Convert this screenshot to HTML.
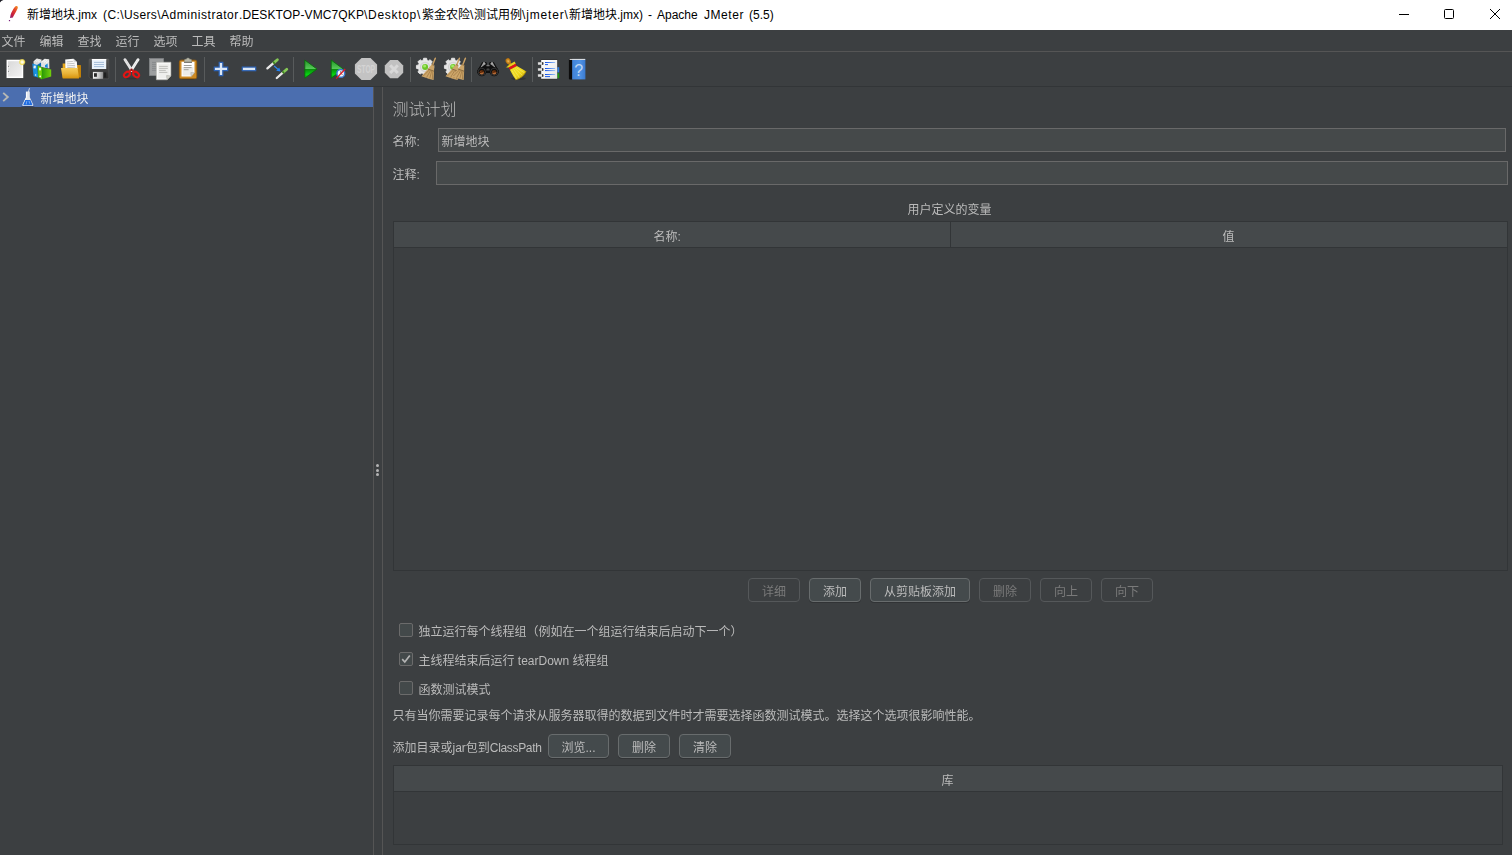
<!DOCTYPE html>
<html lang="zh-CN">
<head>
<meta charset="utf-8">
<title>Apache JMeter</title>
<style>
html,body{margin:0;padding:0;}
body{width:1512px;height:855px;overflow:hidden;background:#3c3f41;position:relative;
 font-family:"Liberation Sans","Noto Sans CJK SC",sans-serif;font-size:12px;color:#bbbbbb;}
.abs{position:absolute;}
#menubar,#tree,#main{will-change:transform;}
#main{position:absolute;left:0;top:0;width:1512px;height:0;}
.t{position:absolute;white-space:nowrap;line-height:16px;height:16px;font-weight:400;margin-top:1px;margin-left:-.5px;}
#titlebar{position:absolute;left:0;top:0;width:1512px;height:30px;background:#ffffff;color:#000;}
#titlebar .t{font-weight:400;color:#000;top:6px;margin-left:0;}
#menubar{position:absolute;left:0;top:30px;width:1512px;height:21px;background:#3c3f41;}
#menuline{position:absolute;left:0;top:51px;width:1512px;height:1px;background:#555555;}
#toolbar{position:absolute;left:0;top:52px;width:1512px;height:34px;background:#3c3f41;}
#toolline{position:absolute;left:0;top:86px;width:1512px;height:1px;background:#323537;}
.sep{position:absolute;top:5px;width:1px;height:25px;background:#585b5c;}
.ic{position:absolute;top:6px;width:22px;height:22px;overflow:visible;}
#tree{position:absolute;left:0;top:87px;width:373px;height:768px;background:#3c3f41;}
#treesel{position:absolute;left:0;top:0;width:373px;height:20px;background:#4b6eaf;}
.vline{position:absolute;top:87px;width:1px;height:768px;background:#555555;}
.field{position:absolute;box-sizing:border-box;background:#45494a;border:1px solid #696969;}
.tbl{position:absolute;box-sizing:border-box;border:1px solid #323537;background:#3c3f41;}
.th{position:absolute;left:0;top:0;right:0;height:25px;background:#45494b;border-bottom:1px solid #323537;}
.btn{position:absolute;box-sizing:border-box;height:24px;border:1px solid #686c6d;border-radius:4px;background:#444a4c;
 text-align:center;line-height:24px;padding-top:1px;font-weight:400;color:#bbbbbb;box-shadow:0 1px 0 rgba(0,0,0,.18);}
.btn.dis{background:#3c3f41;border-color:#55585a;color:#7a7a7a;box-shadow:none;}
.cb{position:absolute;box-sizing:border-box;width:14px;height:14px;border:1px solid #6b6b6b;border-radius:2px;background:#43494a;}
</style>
</head>
<body>
<div id="titlebar">
<svg class="abs" style="left:0;top:0" width="6" height="6" viewBox="0 0 6 6"><path d="M0 0H3.4Q.9 .6 0 2.6Z" fill="#1a1a22"/></svg>
<svg class="abs" style="left:7px;top:5px" width="12" height="17" viewBox="0 0 12 17">
<defs><linearGradient id="fg" x1="1" y1="0" x2="0" y2="1"><stop offset="0" stop-color="#f79a23"/><stop offset=".35" stop-color="#e4442a"/><stop offset=".7" stop-color="#c7203e"/><stop offset="1" stop-color="#7a1f7d"/></linearGradient></defs>
<path d="M9.3 1C10.8 .9 11.2 2.2 10.6 3.6C9.6 6 8 8.8 6.4 11.2L6 12.4L3 13L3.6 9.8C4.6 7 6.4 3.8 7.8 2.1C8.3 1.4 8.8 1 9.3 1Z" fill="url(#fg)"/>
<rect x="1.9" y="15" width="1.2" height="1.2" fill="#7a1f7d"/>
</svg>
<span class="t" style="left:27px">新增地块.jmx</span>
<span class="t" style="left:103px;letter-spacing:.4px">(C:\Users\</span>
<span class="t" style="left:161px;letter-spacing:.55px">Administrator</span>
<span class="t" style="left:239px;letter-spacing:.12px">.DESKTOP-VMC7QKP</span>
<span class="t" style="left:364px;letter-spacing:.7px">\Desktop\</span>
<span class="t" style="left:422px">紫金农险\</span>
<span class="t" style="left:474px">测试用例</span>
<span class="t" style="left:522px;letter-spacing:.85px">\jmeter\</span>
<span class="t" style="left:569px">新增地块.jmx)</span>
<span class="t" style="left:648px">-</span>
<span class="t" style="left:657px">Apache</span>
<span class="t" style="left:704px;letter-spacing:.55px">JMeter</span>
<span class="t" style="left:749px">(5.5)</span>
<svg class="abs" style="left:1394px;top:4px" width="112" height="22" viewBox="0 0 112 22" fill="none" stroke="#000" stroke-width="1">
<path d="M5 10.5H15"/>
<rect x="50.5" y="5.5" width="9" height="9" rx="1"/>
<path d="M96 5L106 15M106 5L96 15"/>
</svg>
</div>
<div id="menubar">
<span class="t" style="left:2px;top:3px">文件</span>
<span class="t" style="left:40px;top:3px">编辑</span>
<span class="t" style="left:78px;top:3px">查找</span>
<span class="t" style="left:116px;top:3px">运行</span>
<span class="t" style="left:154px;top:3px">选项</span>
<span class="t" style="left:192px;top:3px">工具</span>
<span class="t" style="left:230px;top:3px">帮助</span>
</div>
<div id="menuline"></div>
<!--TB0-->
<div id="toolbar">
<svg class="ic" style="left:4px" width="22" height="22" viewBox="0 0 22 22"><defs><linearGradient id="ng" x1="0" y1="0" x2="1" y2="1"><stop offset="0" stop-color="#d9d9d9"/><stop offset="1" stop-color="#f2f2f2"/></linearGradient>
<radialGradient id="ny"><stop offset="0" stop-color="#ffffff"/><stop offset=".35" stop-color="#fdf6c8"/><stop offset=".65" stop-color="#f3df55" stop-opacity=".95"/><stop offset="1" stop-color="#e8cf3a" stop-opacity="0"/></radialGradient></defs>
<rect x="2.3" y="1.5" width="17.2" height="18.9" fill="#8d8d86" opacity=".35"/>
<rect x="2.6" y="1.8" width="16.6" height="18.2" fill="#ffffff"/>
<rect x="4" y="3.2" width="13.8" height="15.4" fill="url(#ng)"/>
<circle cx="4.6" cy="8.2" r=".55" fill="#666"/><circle cx="5.4" cy="9" r=".6" fill="#fff"/>
<circle cx="4.6" cy="13.2" r=".55" fill="#666"/><circle cx="5.4" cy="14" r=".6" fill="#fff"/>
<circle cx="18.2" cy="4.1" r="3.6" fill="url(#ny)"/></svg>
<svg class="ic" style="left:32px" width="22" height="22" viewBox="0 0 22 22"><defs><linearGradient id="tg" x1="0" y1="0" x2="1" y2="0"><stop offset="0" stop-color="#2a9a06"/><stop offset="1" stop-color="#74d00c"/></linearGradient>
<linearGradient id="tb" x1="0" y1="0" x2="1" y2="0"><stop offset="0" stop-color="#1a84d8"/><stop offset="1" stop-color="#169be6"/></linearGradient></defs>
<path d="M1.4 3.4L4.6 .6L9.6 1.6L9.4 8.5L2 8.5Z" fill="#d9d9d9"/>
<path d="M2.6 3.2L5.6 1.2M4.2 3.8L7.4 1.6M6 4.2L9 2.2" stroke="#f6f6f6" stroke-width=".9"/>
<path d="M9 3.4L12.6 .7L17.2 1.2L17.4 10.5L9 9Z" fill="#e2e2e2"/>
<path d="M10.2 3.8L13.4 1.6M12 4.4L15.2 2.2M14 5L16.8 3" stroke="#fafafa" stroke-width=".9"/>
<path d="M5 7L9 4.6L9.4 17L6 18.5Z" fill="#0b68b4"/>
<path d="M13 7.2L15.6 5.4L15.8 10L13 9.2Z" fill="#1a8ada"/>
<path d="M.2 5.4L5.2 7L6.2 19.6L1.6 18.2Z" fill="url(#tb)"/>
<rect x="1.6" y="7.6" width="2.2" height="2.8" fill="#e6eef6" transform="rotate(8 2.7 9)"/>
<circle cx="3.6" cy="17" r=".75" fill="#e6f0fa"/>
<path d="M10 9.6L19.2 11.4L19.2 18.6L10 21.2Z" fill="url(#tg)"/>
<path d="M5.8 7.6L10 9.6L10 21.2L6.2 19.2Z" fill="#78d60e"/>
<path d="M5.8 7.6L10 9.6L10 21.2L6.2 19.2Z" fill="none" stroke="#2f9a08" stroke-width=".5"/>
<rect x="7" y="9.8" width="2" height="2.6" fill="#eaf6dc"/>
<circle cx="8.2" cy="18.4" r=".8" fill="#ffffff"/></svg>
<svg class="ic" style="left:60px" width="22" height="22" viewBox="0 0 22 22"><defs><linearGradient id="og" x1="0" y1="0" x2="0" y2="1"><stop offset="0" stop-color="#f6cd5c"/><stop offset=".5" stop-color="#eab53a"/><stop offset="1" stop-color="#d6920a"/></linearGradient>
<linearGradient id="ob" x1="0" y1="0" x2="1" y2="0"><stop offset="0" stop-color="#e8a91c"/><stop offset="1" stop-color="#c07f06"/></linearGradient></defs>
<path d="M2.7 5.4H7.6L8.8 7H20.4Q21 7 21 7.8V19.6H2.7Z" fill="url(#ob)"/>
<path d="M5.6 1H13.8L17 4.4V11.4H5Z" fill="#fbfbfb" transform="rotate(-4 11 6)"/>
<path d="M7 3.6H13M7 5.6H14.6M7 7.6H15M7 9.4H15" stroke="#b9b9b9" stroke-width=".8" transform="rotate(-4 11 6)"/>
<path d="M13.8 1L17 4.4H13.8Z" fill="#d5d8dc" transform="rotate(-4 11 6)"/>
<path d="M1.2 9.9Q1 9.9 1 10.4L2.6 20Q2.7 20.6 3.3 20.6H18.6Q19.2 20.6 19 20L17.6 10.6Q17.5 9.9 16.8 9.9Z" fill="url(#og)"/></svg>
<svg class="ic" style="left:88px" width="22" height="22" viewBox="0 0 22 22"><defs><linearGradient id="sg" x1="0" y1="0" x2="0" y2="1"><stop offset="0" stop-color="#555555"/><stop offset="1" stop-color="#2b2b2b"/></linearGradient>
<linearGradient id="ss" x1="0" y1="0" x2="1" y2="0"><stop offset="0" stop-color="#f4f4f4"/><stop offset=".6" stop-color="#c8c8c8"/><stop offset="1" stop-color="#8f8f8f"/></linearGradient></defs>
<path d="M2 1H20Q20.8 1 20.8 1.8V20Q20.8 20.8 20 20.8H3L1.1 19V1.8Q1.1 1 2 1Z" fill="url(#sg)" stroke="#606060" stroke-width=".5"/>
<rect x="3.9" y="1" width="14.3" height="10" fill="#eaf2fb"/>
<rect x="3.9" y="1" width="14.3" height="1.2" fill="#ffffff"/>
<path d="M6 4.4H16M6 6.5H16M6 8.6H16" stroke="#9db7d5" stroke-width=".9"/>
<rect x="4.9" y="13.9" width="10.2" height="6.9" fill="url(#ss)"/>
<rect x="6" y="15.2" width="2.9" height="3.6" fill="#2a2a2a"/>
<rect x="16" y="14.5" width="2.2" height="5" fill="#1f1f1f"/></svg>
<div class="sep" style="left:115px"></div>
<svg class="ic" style="left:121px" width="22" height="22" viewBox="0 0 22 22"><ellipse cx="11" cy="20.6" rx="6" ry="1" fill="#222" opacity=".35"/>
<path d="M3.9 1.6L10.9 12.6" stroke="#e6e6e6" stroke-width="2.8" stroke-linecap="round"/>
<path d="M17.1 1.6L10.1 12.6" stroke="#f4f4f4" stroke-width="2.8" stroke-linecap="round"/>
<path d="M3.9 1.6L10.9 12.6M17.1 1.6L10.1 12.6" stroke="#c4c4c4" stroke-width=".6" stroke-dasharray="1 1"/>
<ellipse cx="5.9" cy="16.5" rx="3.3" ry="2.3" transform="rotate(-40 5.9 16.5)" fill="none" stroke="#e21414" stroke-width="2.1"/>
<ellipse cx="15.1" cy="16.5" rx="3.3" ry="2.3" transform="rotate(40 15.1 16.5)" fill="none" stroke="#e21414" stroke-width="2.1"/>
<path d="M8.2 13.8L10.5 11.6L12.8 13.8" fill="none" stroke="#e21414" stroke-width="2"/>
<circle cx="10.5" cy="11.8" r=".7" fill="#333"/></svg>
<svg class="ic" style="left:149px" width="22" height="22" viewBox="0 0 22 22"><rect x=".4" y=".5" width="14.2" height="17.1" fill="#9c9e9f" stroke="#85888a" stroke-width=".6"/>
<path d="M3 4.4H12.4M3 6.4H12.4M3 8.4H12.4M3 10.4H12.4M3 12.3H12.4" stroke="#85878a" stroke-width=".9"/>
<path d="M7.4 4.2H21.9V18L18.2 21.8H7.4Z" fill="#ffffff" stroke="#b0b0a8" stroke-width=".6"/>
<path d="M8.6 5.4H20.7V17.4L17.6 20.6H8.6Z" fill="#efefed"/>
<path d="M10.1 8.4H18.8M10.1 10.4H18.8M10.1 12.4H16.8M10.1 14.4H18.4" stroke="#b9b9b5" stroke-width=".9"/>
<path d="M21.9 18L18.2 21.8L17.6 17.6Z" fill="#d8d8d2" stroke="#9c9c94" stroke-width=".5"/></svg>
<svg class="ic" style="left:177px" width="22" height="22" viewBox="0 0 22 22"><ellipse cx="11" cy="21.4" rx="7" ry=".7" fill="#1c1c1c" opacity=".3"/>
<rect x="2.4" y="2.2" width="17.3" height="18.5" rx="1.6" fill="#cc8a24" stroke="#9b5f0a" stroke-width=".9"/>
<path d="M4.5 3.8H17.5V14.8L14.2 18.4H4.5Z" fill="#ffffff"/>
<path d="M5.6 9H16.4V14.4L13.6 17.4H5.6Z" fill="#ecece8"/>
<path d="M17.5 14.8L14.2 18.4L13.8 14.6Z" fill="#d9d9d2" stroke="#8a8a84" stroke-width=".4"/>
<path d="M6.8 7.5H14.6M6.8 9.6H14.6M6.8 11.7H11.6" stroke="#a2a29c" stroke-width="1"/>
<path d="M7.4 4V2.3Q7.4 1.3 8.4 1.3H9.3Q9.6 -.1 11 -.1Q12.4 -.1 12.7 1.3H13.6Q14.6 1.3 14.6 2.3V4Z" fill="#b9b9aa" stroke="#8e8e80" stroke-width=".4"/>
<path d="M7 4.4H15" stroke="#4c4c44" stroke-width=".8"/></svg>
<div class="sep" style="left:204px"></div>
<svg class="ic" style="left:210px" width="22" height="22" viewBox="0 0 22 22"><path d="M9.2 4.3H12.8V9.1H17.7V12.7H12.8V17.7H9.2V12.7H4.3V9.1H9.2Z" fill="#dbe7f6" stroke="#2d63b6" stroke-width="1.2"/></svg>
<svg class="ic" style="left:238px" width="22" height="22" viewBox="0 0 22 22"><rect x="4.3" y="9.1" width="13.4" height="3.6" fill="#dbe7f6" stroke="#2d63b6" stroke-width="1.2"/></svg>
<svg class="ic" style="left:266px" width="22" height="22" viewBox="0 0 22 22"><path d="M1.4 10.4L8 4.6" stroke="#e9e9e9" stroke-width="2.3" stroke-linecap="round"/>
<path d="M8 4.6L11.4 1.7" stroke="#86c856" stroke-width="2.8" stroke-linecap="round"/>
<path d="M7.3 5.2L8.5 4.2" stroke="#3f7d22" stroke-width="2.8"/>
<path d="M10.8 20L17.4 14.2" stroke="#e9e9e9" stroke-width="2.3" stroke-linecap="round"/>
<path d="M17.4 14.2L20.8 11.3" stroke="#86c856" stroke-width="2.8" stroke-linecap="round"/>
<path d="M16.7 14.8L17.9 13.8" stroke="#3f7d22" stroke-width="2.8"/>
<path d="M8.2 8L12 11.4" stroke="#2f86f0" stroke-width="1.2"/>
<path d="M14.6 13.4L10.2 12.8L13.2 9.4Z" fill="#1f82f5"/></svg>
<div class="sep" style="left:293px"></div>
<svg class="ic" style="left:299px" width="22" height="22" viewBox="0 0 22 22"><defs><linearGradient id="pg" x1="0" y1="0" x2="0" y2="1"><stop offset="0" stop-color="#1f9a22"/><stop offset=".49" stop-color="#58c85a"/><stop offset=".5" stop-color="#0a8a0c"/><stop offset=".8" stop-color="#08d412"/><stop offset="1" stop-color="#0aa40e"/></linearGradient></defs>
<path d="M5.8 2L18 11.1L5.8 20.2Z" fill="url(#pg)" stroke="#0b6a0d" stroke-width=".9" stroke-linejoin="round"/></svg>
<svg class="ic" style="left:327px" width="22" height="22" viewBox="0 0 22 22"><path d="M4.2 2L16.4 11.1L4.2 20.2Z" fill="url(#pg)" stroke="#0b6a0d" stroke-width=".9" stroke-linejoin="round"/>
<circle cx="13.8" cy="15.4" r="3.9" fill="#f4f6fa" stroke="#3a78cc" stroke-width="1.5"/>
<path d="M13.8 13V15.4L15.6 16.6" stroke="#555" stroke-width=".8" fill="none"/>
<path d="M9.2 20.6L18.2 11" stroke="#e01822" stroke-width="1.3"/></svg>
<svg class="ic" style="left:355px" width="22" height="22" viewBox="0 0 22 22"><path d="M6.5 -.1H15.5L22.1 6.5V15.5L15.5 22.1H6.5L-.1 15.5V6.5Z" fill="#c3c3c3"/>
<text x="11" y="15" text-anchor="middle" font-family="Liberation Sans, sans-serif" font-weight="700" font-size="11.4" fill="#d4d4d4" textLength="18" lengthAdjust="spacingAndGlyphs">STOP</text></svg>
<svg class="ic" style="left:383px" width="22" height="22" viewBox="0 0 22 22"><path d="M7.2 2H14.8L20.2 7.4V14.8L14.8 20.2H7.2L1.8 14.8V7.4Z" fill="#c1c1c1"/>
<path d="M7.2 7.2L14.8 15M14.8 7.2L7.2 15" stroke="#d8d8d8" stroke-width="3"/></svg>
<div class="sep" style="left:410px"></div>
<svg class="ic" style="left:416px" width="22" height="22" viewBox="0 0 22 22"><path d="M7.09 2.40L7.61 0.23L10.59 0.23L11.11 2.40L12.27 2.89L14.18 1.71L16.29 3.82L15.11 5.73L15.60 6.89L17.77 7.41L17.77 10.39L15.60 10.91L15.11 12.07L16.29 13.98L14.18 16.09L12.27 14.91L11.11 15.40L10.59 17.57L7.61 17.57L7.09 15.40L5.93 14.91L4.02 16.09L1.91 13.98L3.09 12.07L2.60 10.91L0.43 10.39L0.43 7.41L2.60 6.89L3.09 5.73L1.91 3.82L4.02 1.71L5.93 2.89Z" fill="#e6e6e6" stroke="#ececec" stroke-width=".8" stroke-linejoin="round"/><circle cx="9.1" cy="8.9" r="5.2" fill="#d2d2d2"/><circle cx="9.1" cy="8.9" r="4.2" fill="#e2e2e2"/><circle cx="9.1" cy="8.9" r="3" fill="#6cc626"/><circle cx="8.6" cy="8.0" r="1.5" fill="#a4e868"/><g transform="translate(19.3 0.2)">
<path d="M0 0L-2.8 7" stroke="#c9a064" stroke-width="1.5" stroke-linecap="round"/>
<path d="M-3.5 6.1L-1.1 6.9L-1.3 14L-1.7 21.9L-6 20.7L-13.9 18L-7 10.3Z" fill="#cda66a"/>
<path d="M-6 11.8L-12 17.8M-4.8 12.4L-8.8 19.4M-3.6 12.8L-5.6 20.4M-2.4 13L-3 21" stroke="#9a7440" stroke-width=".7"/>
<path d="M-7.4 10.8L-1.3 13" stroke="#80623a" stroke-width=".9"/>
<path d="M-3.4 6.4L-1.2 7.2" stroke="#80623a" stroke-width=".7"/>
</g></svg>
<svg class="ic" style="left:444px" width="22" height="22" viewBox="0 0 22 22"><path d="M7.09 2.40L7.61 0.23L10.59 0.23L11.11 2.40L12.27 2.89L14.18 1.71L16.29 3.82L15.11 5.73L15.60 6.89L17.77 7.41L17.77 10.39L15.60 10.91L15.11 12.07L16.29 13.98L14.18 16.09L12.27 14.91L11.11 15.40L10.59 17.57L7.61 17.57L7.09 15.40L5.93 14.91L4.02 16.09L1.91 13.98L3.09 12.07L2.60 10.91L0.43 10.39L0.43 7.41L2.60 6.89L3.09 5.73L1.91 3.82L4.02 1.71L5.93 2.89Z" fill="#e6e6e6" stroke="#ececec" stroke-width=".8" stroke-linejoin="round"/><circle cx="9.1" cy="8.9" r="5.2" fill="#d2d2d2"/><circle cx="9.1" cy="8.9" r="4.2" fill="#e2e2e2"/><circle cx="9.1" cy="8.9" r="3" fill="#6cc626"/><circle cx="8.6" cy="8.0" r="1.5" fill="#a4e868"/><g transform="translate(15.4 0.2)">
<path d="M0 0L-2.8 7" stroke="#c9a064" stroke-width="1.5" stroke-linecap="round"/>
<path d="M-3.5 6.1L-1.1 6.9L-1.3 14L-1.7 21.9L-6 20.7L-13.9 18L-7 10.3Z" fill="#cda66a"/>
<path d="M-6 11.8L-12 17.8M-4.8 12.4L-8.8 19.4M-3.6 12.8L-5.6 20.4M-2.4 13L-3 21" stroke="#9a7440" stroke-width=".7"/>
<path d="M-7.4 10.8L-1.3 13" stroke="#80623a" stroke-width=".9"/>
<path d="M-3.4 6.4L-1.2 7.2" stroke="#80623a" stroke-width=".7"/>
</g><g transform="translate(21.4 0.2)">
<path d="M0 0L-2.8 7" stroke="#c9a064" stroke-width="1.5" stroke-linecap="round"/>
<path d="M-3.5 6.1L-1.1 6.9L-1.3 14L-1.7 21.9L-6 20.7L-13.9 18L-7 10.3Z" fill="#cda66a"/>
<path d="M-6 11.8L-12 17.8M-4.8 12.4L-8.8 19.4M-3.6 12.8L-5.6 20.4M-2.4 13L-3 21" stroke="#9a7440" stroke-width=".7"/>
<path d="M-7.4 10.8L-1.3 13" stroke="#80623a" stroke-width=".9"/>
<path d="M-3.4 6.4L-1.2 7.2" stroke="#80623a" stroke-width=".7"/>
</g></svg>
<div class="sep" style="left:471px"></div>
<svg class="ic" style="left:477px" width="22" height="22" viewBox="0 0 22 22"><path d="M4.6 5Q5 4 6 4H8.6Q9.6 4 9.8 5L10.2 7H11.8L12.2 5Q12.4 4 13.4 4H16Q17 4 17.4 5L21.6 12.6V15H.4V12.6Z" fill="#101010"/>
<path d="M6 5H8.4L8.6 6.2L6.6 7.6L3 10.4ZM16 5H13.6L13.4 6.2L15.4 7.6L19 10.4Z" fill="#9c9c9c"/>
<path d="M6 4.8H8M14 4.8H16" stroke="#d0d0d0" stroke-width=".8"/>
<rect x="9.4" y="6.8" width="3.2" height="1.4" rx=".5" fill="#7a7a7a"/>
<path d="M9.8 10.4H12.2L12.8 12.6H9.2Z" fill="#444444"/>
<circle cx="4.8" cy="13.8" r="4.5" fill="#0c0c0c"/><circle cx="17.2" cy="13.8" r="4.5" fill="#0c0c0c"/>
<circle cx="4.8" cy="13.8" r="3.6" fill="none" stroke="#5c5c5c" stroke-width=".5"/><circle cx="17.2" cy="13.8" r="3.6" fill="none" stroke="#5c5c5c" stroke-width=".5"/>
<defs><linearGradient id="bl" x1="0" y1="0" x2="0" y2="1"><stop offset="0" stop-color="#4a2206"/><stop offset=".55" stop-color="#94481a"/><stop offset="1" stop-color="#d08a52"/></linearGradient></defs>
<circle cx="4.8" cy="14.2" r="2.2" fill="url(#bl)"/><circle cx="17.2" cy="14.2" r="2.2" fill="url(#bl)"/>
<path d="M2.8 14.8L6.8 13M15.2 14.8L19.2 13" stroke="#3a1a04" stroke-width=".7"/></svg>
<svg class="ic" style="left:505px" width="22" height="22" viewBox="0 0 22 22"><defs><linearGradient id="rb" x1="0" y1="0" x2="1" y2="1"><stop offset="0" stop-color="#efe022"/><stop offset=".55" stop-color="#f0d81c"/><stop offset="1" stop-color="#c4a204"/></linearGradient>
<radialGradient id="rk"><stop offset="0" stop-color="#ecc06a"/><stop offset=".5" stop-color="#cf8c22"/><stop offset="1" stop-color="#b06c0c"/></radialGradient></defs>
<ellipse cx="13.4" cy="20.6" rx="7.4" ry="1.5" fill="#1c1c1c" opacity=".35"/>
<path d="M3.6 4L6.4 8" stroke="#c8861e" stroke-width="2.6"/>
<ellipse cx="3.2" cy="3.2" rx="2.5" ry="3.1" transform="rotate(-28 3.2 3.2)" fill="url(#rk)"/>
<path d="M1.3 9.5Q3.6 6.6 6.2 5.6L9.6 3.6Q10.4 5 10.7 6L3.7 9.6Z" fill="#e6cf1e"/>
<path d="M1.3 9.5Q3.6 6.6 6.2 5.6" stroke="#b69a08" stroke-width=".5" fill="none"/>
<path d="M3.6 9.4L10.6 5.8L11.9 8.1L4.9 11.7Z" fill="#e0141a"/>
<path d="M4.9 11.7L11.9 8.1L21 13.2Q20 16.6 16.6 19Q13.6 21 10.8 21.8Q8.4 18.6 6.6 15Z" fill="url(#rb)"/>
<path d="M7 12.6L11.6 20.8M8.8 11.6L14.6 19.8M10.4 10.8L17.6 17.6M11.6 9.8L19.8 15" stroke="#f8f08a" stroke-width=".6" opacity=".8"/>
<path d="M21 13.2Q20 16.6 16.6 19Q13.6 21 10.8 21.8" stroke="#b09002" stroke-width=".9" fill="none"/></svg>
<div class="sep" style="left:532px"></div>
<svg class="ic" style="left:538px" width="22" height="22" viewBox="0 0 22 22"><defs><linearGradient id="fp" x1="0" y1="0" x2="1" y2="1"><stop offset="0" stop-color="#ffffff"/><stop offset="1" stop-color="#e6e6e6"/></linearGradient>
<linearGradient id="fl" gradientUnits="userSpaceOnUse" x1="7" y1="0" x2="17.2" y2="0"><stop offset="0" stop-color="#0a4ae6"/><stop offset="1" stop-color="#9cc4f6"/></linearGradient></defs>
<rect x="2.8" y="1.6" width="16.8" height="19.6" rx=".6" fill="#2a2a2a"/>
<rect x="19.4" y="9.2" width="1.8" height="5.2" fill="#2e7fe6"/><rect x="19.4" y="15.2" width="1.8" height="5" fill="#1d9a14"/>
<rect x="3.2" y="2" width="16" height="18.8" fill="url(#fp)"/>
<g fill="#e4e4e4" stroke="#9a9a9a" stroke-width=".3"><rect x="0" y="4.2" width="4.6" height="2.6"/><rect x="0" y="10.2" width="4.6" height="2.6"/><rect x="0" y="16.2" width="4.6" height="2.6"/></g>
<g fill="#111"><rect x="4.2" y="4.1" width="1.2" height="2.8" rx=".6"/><rect x="4.2" y="10.1" width="1.2" height="2.8" rx=".6"/><rect x="4.2" y="16.1" width="1.2" height="2.8" rx=".6"/></g>
<g stroke="url(#fl)" stroke-width="1"><path d="M7 4.5H17.2"/><path d="M7 10.5H17.2"/><path d="M7 12.6H17.2"/><path d="M7 16.5H17.2"/></g>
<path d="M7 6.6H10" stroke="#1d5be8" stroke-width="1"/><path d="M7 18.6H12" stroke="#1d5be8" stroke-width="1"/></svg>
<svg class="ic" style="left:566px" width="22" height="22" viewBox="0 0 22 22"><defs><linearGradient id="hb" x1="0" y1="0" x2="1" y2="0"><stop offset="0" stop-color="#3f82d8"/><stop offset=".6" stop-color="#4f92e4"/><stop offset="1" stop-color="#3a7ad0"/></linearGradient></defs>
<path d="M3.6 .8H6.2V21.4H3.6Q2.9 21.4 2.9 20.6V1.6Q2.9 .8 3.6 .8Z" fill="#0c0c0c"/>
<rect x="6.2" y="1.2" width="13.2" height="20.2" fill="url(#hb)"/>
<rect x="3.6" y=".9" width="15.6" height="1" fill="#e8e8e8"/>
<text x="12.7" y="18" text-anchor="middle" font-family="Liberation Sans, sans-serif" font-size="16" fill="#d6e4f6" opacity=".85">?</text></svg>
</div>
<div id="toolline"></div>
<!--TB1-->
<div id="tree"><div id="treesel"></div>
<svg class="abs" style="left:2px;top:4px" width="8" height="12" viewBox="0 0 8 12"><path d="M1.2 1.9L5.8 6L1.2 10.1" fill="none" stroke="#b7b8b4" stroke-width="1.9"/></svg>
<svg class="abs" style="left:20px;top:1px" width="16" height="19" viewBox="0 0 16 19">
<ellipse cx="7.8" cy="18.3" rx="6.8" ry=".7" fill="#2a3350" opacity=".75"/>
<path d="M9.5 .2L7.6 6.4" stroke="#dfe4ee" stroke-width=".9"/>
<path d="M5.9 3.6H9.8V9.2L13.3 16.8Q13.6 18.1 12.4 18.1H3.2Q2 18.1 2.3 16.8L5.9 9.2Z" fill="#e3e7ee"/>
<path d="M6.6 4.2V9.4L4.2 14.6" stroke="#ffffff" stroke-width="1" fill="none"/>
<path d="M5.3 12H10.4L12.3 16.4Q12.5 17.3 11.7 17.3H3.9Q3.1 17.3 3.4 16.4Z" fill="#1f6be0"/>
<path d="M6.8 13L6.2 16.4M9 12.8L9.6 15.6" stroke="#8cb8f6" stroke-width=".8"/>
</svg>
<span class="t" style="left:41px;top:3px;color:#f2f2f2">新增地块</span>
</div>
<div class="vline" style="left:373px"></div>
<div class="vline" style="left:382px"></div>
<div class="abs" style="left:376px;top:464px;width:3px;height:3px;border-radius:50%;background:#b4b4b4"></div>
<div class="abs" style="left:376px;top:469px;width:3px;height:3px;border-radius:50%;background:#b4b4b4"></div>
<div class="abs" style="left:376px;top:473px;width:3px;height:3px;border-radius:50%;background:#b4b4b4"></div>
<div id="main">
<span class="t" style="left:393px;top:99px;font-size:16px;line-height:20px;height:20px;font-weight:300">测试计划</span>
<span class="t" style="left:393px;top:133px">名称:</span>
<div class="field" style="left:438px;top:128px;width:1068px;height:24px"></div>
<span class="t" style="left:442px;top:133px">新增地块</span>
<span class="t" style="left:393px;top:166px">注释:</span>
<div class="field" style="left:436px;top:161px;width:1072px;height:24px"></div>
<span class="t" style="left:908px;top:201px">用户定义的变量</span>
<div class="tbl" style="left:393px;top:221px;width:1115px;height:350px"><div class="th"></div>
<div class="abs" style="left:556px;top:0;width:1px;height:25px;background:#323537"></div></div>
<span class="t" style="left:654px;top:228px">名称:</span>
<span class="t" style="left:1223px;top:228px">值</span>
<div class="btn dis" style="left:748px;top:578px;width:52px">详细</div>
<div class="btn" style="left:809px;top:578px;width:52px">添加</div>
<div class="btn" style="left:870px;top:578px;width:100px">从剪贴板添加</div>
<div class="btn dis" style="left:979px;top:578px;width:52px">删除</div>
<div class="btn dis" style="left:1040px;top:578px;width:52px">向上</div>
<div class="btn dis" style="left:1101px;top:578px;width:52px">向下</div>
<div class="cb" style="left:399px;top:623px"></div>
<span class="t" style="left:419px;top:623px">独立运行每个线程组（例如在一个组运行结束后启动下一个）</span>
<div class="cb" style="left:399px;top:652px"></div>
<svg class="abs" style="left:399px;top:652px" width="14" height="14" viewBox="0 0 14 14"><path d="M3.2 7.2L5.8 10L10.8 3.6" fill="none" stroke="#b4b4b4" stroke-width="1.7"/></svg>
<span class="t" style="left:419px;top:652px">主线程结束后运行 tearDown 线程组</span>
<div class="cb" style="left:399px;top:681px"></div>
<span class="t" style="left:419px;top:681px">函数测试模式</span>
<span class="t" style="left:393px;top:707px">只有当你需要记录每个请求从服务器取得的数据到文件时才需要选择函数测试模式。选择这个选项很影响性能。</span>
<span class="t" style="left:393px;top:739px">添加目录或jar包到<span style="letter-spacing:-.33px">ClassPath</span></span>
<div class="btn" style="left:548px;top:734px;width:61px">浏览...</div>
<div class="btn" style="left:618px;top:734px;width:52px">删除</div>
<div class="btn" style="left:679px;top:734px;width:52px">清除</div>
<div class="tbl" style="left:393px;top:765px;width:1110px;height:80px"><div class="th"></div></div>
<span class="t" style="left:942px;top:772px">库</span>
</div>
</body>
</html>
